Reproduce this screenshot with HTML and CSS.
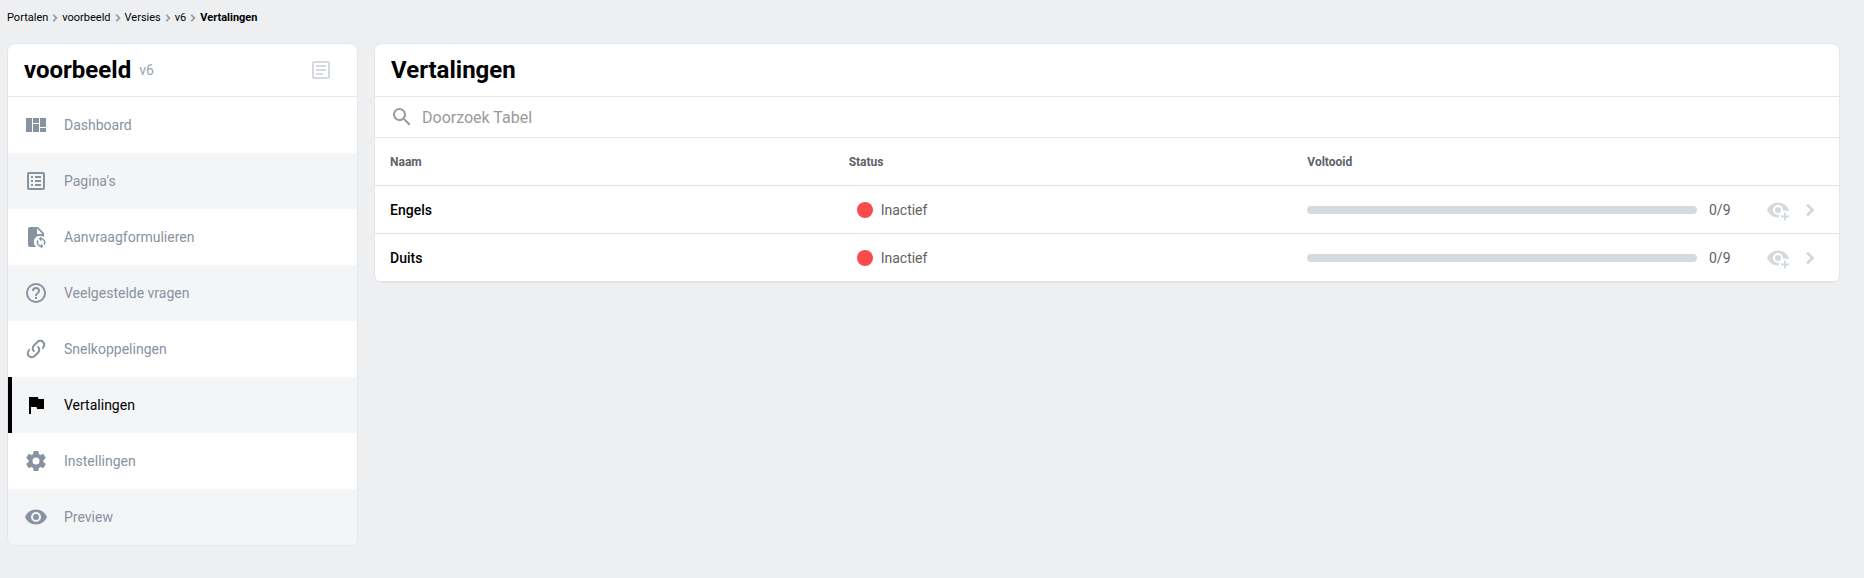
FILE: index.html
```html
<!DOCTYPE html>
<html lang="nl">
  <head>
    <meta charset="UTF-8" />
    <title>Vertalingen</title>
    <link rel="stylesheet" href="styles.css">
  </head>
  <body>
    <nav class="breadcrumbs" aria-label="Kruimelpad">
      <a href="#">Portalen</a>
      <svg viewBox="6 5 12 14"><path d="M8.59,16.58L13.17,12L8.59,7.41L10,6L16,12L10,18Z" /></svg>
      <a href="#">voorbeeld</a>
      <svg viewBox="6 5 12 14"><path d="M8.59,16.58L13.17,12L8.59,7.41L10,6L16,12L10,18Z" /></svg>
      <a href="#">Versies</a>
      <svg viewBox="6 5 12 14"><path d="M8.59,16.58L13.17,12L8.59,7.41L10,6L16,12L10,18Z" /></svg>
      <a href="#">v6</a>
      <svg viewBox="6 5 12 14"><path d="M8.59,16.58L13.17,12L8.59,7.41L10,6L16,12L10,18Z" /></svg>
      <a href="#" class="current">Vertalingen</a>
    </nav>

    <div class="layout">
      <aside class="card sidebar">
        <div class="card-header">
          <h2>voorbeeld</h2>
          <span class="version">v6</span>
          <button type="button" class="notes-btn" aria-label="Notities">
            <svg class="icon" viewBox="0 0 24 24"><path d="M5,3C3.89,3 3,3.89 3,5V19C3,20.11 3.89,21 5,21H19C20.11,21 21,20.11 21,19V5C21,3.89 20.11,3 19,3H5M5,5H19V19H5V5M7,7V9H17V7H7M7,11V13H17V11H7M7,15V17H14V15H7Z" /></svg>
          </button>
        </div>
        <nav class="menu">
          <a href="#">
            <svg class="icon" viewBox="0 0 24 24"><path d="M2,5V19H8V5H2M9,5V10H15V5H9M16,5V14H22V5H16M9,11V19H15V11H9M16,15V19H22V15H16Z" /></svg>
            Dashboard
          </a>
          <a href="#">
            <svg class="icon" viewBox="0 0 24 24"><path d="M11 15H17V17H11V15M9 7H7V9H9V7M11 13H17V11H11V13M11 9H17V7H11V9M9 11H7V13H9V11M21 5V19C21 20.1 20.1 21 19 21H5C3.9 21 3 20.1 3 19V5C3 3.9 3.9 3 5 3H19C20.1 3 21 3.9 21 5M19 5H5V19H19V5M9 15H7V17H9V15Z" /></svg>
            Pagina's
          </a>
          <a href="#">
            <svg class="icon" viewBox="0 0 24 24">
              <path d="M6,2C4.89,2 4,2.89 4,4V20A2,2 0 0,0 6,22H12.2A6,6 0 0,1 20,12V8L14,2H6M13,3.5L18.5,9H13V3.5Z" />
              <path transform="translate(10.8 11.2) scale(0.52)" d="M12,18A6,6 0 0,1 6,12C6,11 6.25,10.03 6.7,9.2L5.24,7.74C4.46,8.97 4,10.43 4,12A8,8 0 0,0 12,20V23L16,19L12,15M12,4V1L8,5L12,9V6A6,6 0 0,1 18,12C18,13 17.75,13.97 17.3,14.8L18.76,16.26C19.54,15.03 20,13.57 20,12A8,8 0 0,0 12,4Z" stroke="currentColor" />
            </svg>
            Aanvraagformulieren
          </a>
          <a href="#">
            <svg class="icon" viewBox="0 0 24 24"><path d="M11,18H13V16H11V18M12,2A10,10 0 0,0 2,12A10,10 0 0,0 12,22A10,10 0 0,0 22,12A10,10 0 0,0 12,2M12,20C7.59,20 4,16.41 4,12C4,7.59 7.59,4 12,4C16.41,4 20,7.59 20,12C20,16.41 16.41,20 12,20M12,6A4,4 0 0,0 8,10H10A2,2 0 0,1 12,8A2,2 0 0,1 14,10C14,12 11,11.75 11,15H13C13,12.75 16,12.5 16,10A4,4 0 0,0 12,6Z" /></svg>
            Veelgestelde vragen
          </a>
          <a href="#">
            <svg class="icon" viewBox="0 0 24 24"><path d="M10.59,13.41C11,13.8 11,14.44 10.59,14.83C10.2,15.22 9.56,15.22 9.17,14.83C7.22,12.88 7.22,9.71 9.17,7.76V7.76L12.71,4.22C14.66,2.27 17.83,2.27 19.78,4.22C21.73,6.17 21.73,9.34 19.78,11.29L18.29,12.78C18.3,11.96 18.17,11.14 17.89,10.36L18.36,9.88C19.54,8.71 19.54,6.81 18.36,5.64C17.19,4.46 15.29,4.46 14.12,5.64L10.59,9.17C9.41,10.34 9.41,12.24 10.59,13.41M13.41,9.17C13.8,8.78 14.44,8.78 14.83,9.17C16.78,11.12 16.78,14.29 14.83,16.24V16.24L11.29,19.78C9.34,21.73 6.17,21.73 4.22,19.78C2.27,17.83 2.27,14.66 4.22,12.71L5.71,11.22C5.7,12.04 5.83,12.86 6.11,13.65L5.64,14.12C4.46,15.29 4.46,17.19 5.64,18.36C6.81,19.54 8.71,19.54 9.88,18.36L13.41,14.83C14.59,13.66 14.59,11.76 13.41,10.59C13,10.2 13,9.56 13.41,9.17Z" /></svg>
            Snelkoppelingen
          </a>
          <a href="#" class="active">
            <svg class="icon" viewBox="0 0 24 24"><path d="M14.4,6L14,4H5V21H7V14H12.6L13,16H20V6H14.4Z" /></svg>
            Vertalingen
          </a>
          <a href="#">
            <svg class="icon" viewBox="0 0 24 24"><path d="M12,15.5A3.5,3.5 0 0,1 8.5,12A3.5,3.5 0 0,1 12,8.5A3.5,3.5 0 0,1 15.5,12A3.5,3.5 0 0,1 12,15.5M19.43,12.97C19.47,12.65 19.5,12.33 19.5,12C19.5,11.67 19.47,11.34 19.43,11L21.54,9.37C21.73,9.22 21.78,8.95 21.66,8.73L19.66,5.27C19.54,5.05 19.27,4.96 19.05,5.05L16.56,6.05C16.04,5.66 15.5,5.32 14.87,5.07L14.5,2.42C14.46,2.18 14.25,2 14,2H10C9.75,2 9.54,2.18 9.5,2.42L9.13,5.07C8.5,5.32 7.96,5.66 7.44,6.05L4.95,5.05C4.73,4.96 4.46,5.05 4.34,5.27L2.34,8.73C2.21,8.95 2.27,9.22 2.46,9.37L4.57,11C4.53,11.34 4.5,11.67 4.5,12C4.5,12.33 4.53,12.65 4.57,12.97L2.46,14.63C2.27,14.78 2.21,15.05 2.34,15.27L4.34,18.73C4.46,18.95 4.73,19.03 4.95,18.95L7.44,17.94C7.96,18.34 8.5,18.68 9.13,18.93L9.5,21.58C9.54,21.82 9.75,22 10,22H14C14.25,22 14.46,21.82 14.5,21.58L14.87,18.93C15.5,18.67 16.04,18.34 16.56,17.94L19.05,18.95C19.27,19.03 19.54,18.95 19.66,18.73L21.66,15.27C21.78,15.05 21.73,14.78 21.54,14.63L19.43,12.97Z" /></svg>
            Instellingen
          </a>
          <a href="#">
            <svg class="icon" viewBox="0 0 24 24"><path d="M12,9A3,3 0 0,0 9,12A3,3 0 0,0 12,15A3,3 0 0,0 15,12A3,3 0 0,0 12,9M12,17A5,5 0 0,1 7,12A5,5 0 0,1 12,7A5,5 0 0,1 17,12A5,5 0 0,1 12,17M12,4.5C7,4.5 2.73,7.61 1,12C2.73,16.39 7,19.5 12,19.5C17,19.5 21.27,16.39 23,12C21.27,7.61 17,4.5 12,4.5Z" /></svg>
            Preview
          </a>
        </nav>
      </aside>

      <main class="card content">
        <div class="card-header">
          <h1>Vertalingen</h1>
        </div>
        <div class="search">
          <svg class="icon" viewBox="0 0 24 24"><path d="M9.5,3A6.5,6.5 0 0,1 16,9.5C16,11.11 15.41,12.59 14.44,13.73L14.71,14H15.5L20.5,19L19,20.5L14,15.5V14.71L13.73,14.44C12.59,15.41 11.11,16 9.5,16A6.5,6.5 0 0,1 3,9.5A6.5,6.5 0 0,1 9.5,3M9.5,5C7,5 5,7 5,9.5C5,12 7,14 9.5,14C12,14 14,12 14,9.5C14,7 12,5 9.5,5Z" /></svg>
          <input type="text" placeholder="Doorzoek Tabel" aria-label="Doorzoek Tabel" />
        </div>
        <table>
          <thead>
            <tr>
              <th>Naam</th>
              <th>Status</th>
              <th>Voltooid</th>
              <th class="actions-col"></th>
            </tr>
          </thead>
          <tbody>
            <tr>
              <td class="name">Engels</td>
              <td><div class="status"><span class="dot"></span>Inactief</div></td>
              <td><div class="progress"><span class="bar"></span><span class="count">0/9</span></div></td>
              <td>
                <div class="actions">
                  <button type="button" aria-label="Bekijk Engels">
                    <svg class="icon" viewBox="0 0 24 24"><path d="M12,4.5C7,4.5 2.73,7.61 1,12C2.73,16.39 7,19.5 12,19.5C12.36,19.5 12.72,19.5 13.08,19.45C13.03,19.13 13,18.82 13,18.5C13,17.94 13.08,17.38 13.24,16.84C12.83,16.94 12.42,17 12,17A5,5 0 0,1 7,12A5,5 0 0,1 12,7A5,5 0 0,1 17,12C17,12.29 16.97,12.59 16.92,12.88C17.58,12.63 18.29,12.5 19,12.5C20.17,12.5 21.31,12.84 22.29,13.5C22.56,13 22.8,12.5 23,12C21.27,7.61 17,4.5 12,4.5M12,9A3,3 0 0,0 9,12A3,3 0 0,0 12,15A3,3 0 0,0 15,12A3,3 0 0,0 12,9M18,14.5V17.5H15V19.5H18V22.5H20V19.5H23V17.5H20V14.5H18Z" /></svg>
                  </button>
                  <button type="button" aria-label="Open Engels">
                    <svg class="icon chevron" viewBox="0 0 24 24"><path d="M8.59,16.58L13.17,12L8.59,7.41L10,6L16,12L10,18Z" /></svg>
                  </button>
                </div>
              </td>
            </tr>
            <tr>
              <td class="name">Duits</td>
              <td><div class="status"><span class="dot"></span>Inactief</div></td>
              <td><div class="progress"><span class="bar"></span><span class="count">0/9</span></div></td>
              <td>
                <div class="actions">
                  <button type="button" aria-label="Bekijk Duits">
                    <svg class="icon" viewBox="0 0 24 24"><path d="M12,4.5C7,4.5 2.73,7.61 1,12C2.73,16.39 7,19.5 12,19.5C12.36,19.5 12.72,19.5 13.08,19.45C13.03,19.13 13,18.82 13,18.5C13,17.94 13.08,17.38 13.24,16.84C12.83,16.94 12.42,17 12,17A5,5 0 0,1 7,12A5,5 0 0,1 12,7A5,5 0 0,1 17,12C17,12.29 16.97,12.59 16.92,12.88C17.58,12.63 18.29,12.5 19,12.5C20.17,12.5 21.31,12.84 22.29,13.5C22.56,13 22.8,12.5 23,12C21.27,7.61 17,4.5 12,4.5M12,9A3,3 0 0,0 9,12A3,3 0 0,0 12,15A3,3 0 0,0 15,12A3,3 0 0,0 12,9M18,14.5V17.5H15V19.5H18V22.5H20V19.5H23V17.5H20V14.5H18Z" /></svg>
                  </button>
                  <button type="button" aria-label="Open Duits">
                    <svg class="icon chevron" viewBox="0 0 24 24"><path d="M8.59,16.58L13.17,12L8.59,7.41L10,6L16,12L10,18Z" /></svg>
                  </button>
                </div>
              </td>
            </tr>
          </tbody>
        </table>
      </main>
    </div>
  </body>
</html>
```
FILE: styles.css
```css
body {
  font-family: Roboto, "Liberation Sans", sans-serif;
  font-size: 14px;
  background-color: #eeeff1;
  color: #000;
  margin: 0;
  padding: 8px 24px 24px 7px;
}

a {
  color: inherit;
  text-decoration: none;
}

button {
  display: flex;
  padding: 0;
  border: none;
  background: none;
  color: #d5dae0;
  cursor: pointer;
}

.icon {
  width: 24px;
  height: 24px;
  flex: none;
  fill: currentColor;
}

.breadcrumbs {
  display: flex;
  align-items: center;
  gap: 3px;
  font-size: 11px;
  line-height: 20px;
}

.breadcrumbs svg {
  width: 8px;
  height: 8px;
  fill: #8a96a3;
  stroke: #8a96a3;
}

.breadcrumbs .current {
  font-weight: 700;
}

.layout {
  display: flex;
  align-items: flex-start;
  gap: 16px;
  margin-top: 15px;
}

.card {
  background: white;
  border: 1px solid #e3e6eb;
  border-radius: 8px;
  overflow: hidden;
}

.sidebar {
  width: 349px;
  flex: none;
}

.content {
  flex: 1;
}

.card-header {
  display: flex;
  align-items: center;
  height: 52px;
  padding: 0 16px;
  border-bottom: 1px solid #e3e6eb;
}

h1,
h2 {
  margin: 0;
  font-size: 24px;
  font-weight: 700;
}

.version {
  margin-left: 8px;
  color: #9aa4b0;
}

.notes-btn {
  margin-left: auto;
  margin-right: 8px;
}

.menu a {
  display: flex;
  align-items: center;
  gap: 16px;
  height: 56px;
  padding-left: 16px;
  color: #8793a0;
}

.menu a:nth-child(even) {
  background-color: #f4f5f7;
}

.menu a.active {
  color: #000;
  box-shadow: inset 4px 0 #000;
}

.search {
  display: flex;
  align-items: center;
  gap: 8px;
  height: 40px;
  padding: 0 15px;
  border-bottom: 1px solid #e3e6eb;
  color: #999;
}

.search input {
  flex: 1;
  border: none;
  outline: none;
  padding: 0;
  font-family: inherit;
  font-size: 16px;
}

.search input::placeholder {
  color: #999;
}

table {
  width: 100%;
  table-layout: fixed;
  border-collapse: collapse;
}

th,
td {
  height: 47px;
  padding: 0 16px 0 15px;
  text-align: left;
  color: #5e6266;
}

th {
  font-size: 12px;
  font-weight: 700;
}

tr {
  border-bottom: 1px solid #dfe1e4;
}

td.name {
  color: #000;
  font-weight: 500;
}

.actions-col {
  width: 57px;
}

.status {
  display: flex;
  align-items: center;
  gap: 8px;
  padding-left: 8px;
}

.dot {
  width: 16px;
  height: 16px;
  border-radius: 50%;
  background-color: #fa4b4b;
}

.progress {
  display: flex;
  align-items: center;
  gap: 12px;
}

.bar {
  flex: 1;
  height: 8px;
  border-radius: 4px;
  background-color: #d5dae0;
}

.count {
  width: 26px;
}

.actions {
  display: flex;
  gap: 8px;
}

.chevron {
  stroke: currentColor;
}
```
